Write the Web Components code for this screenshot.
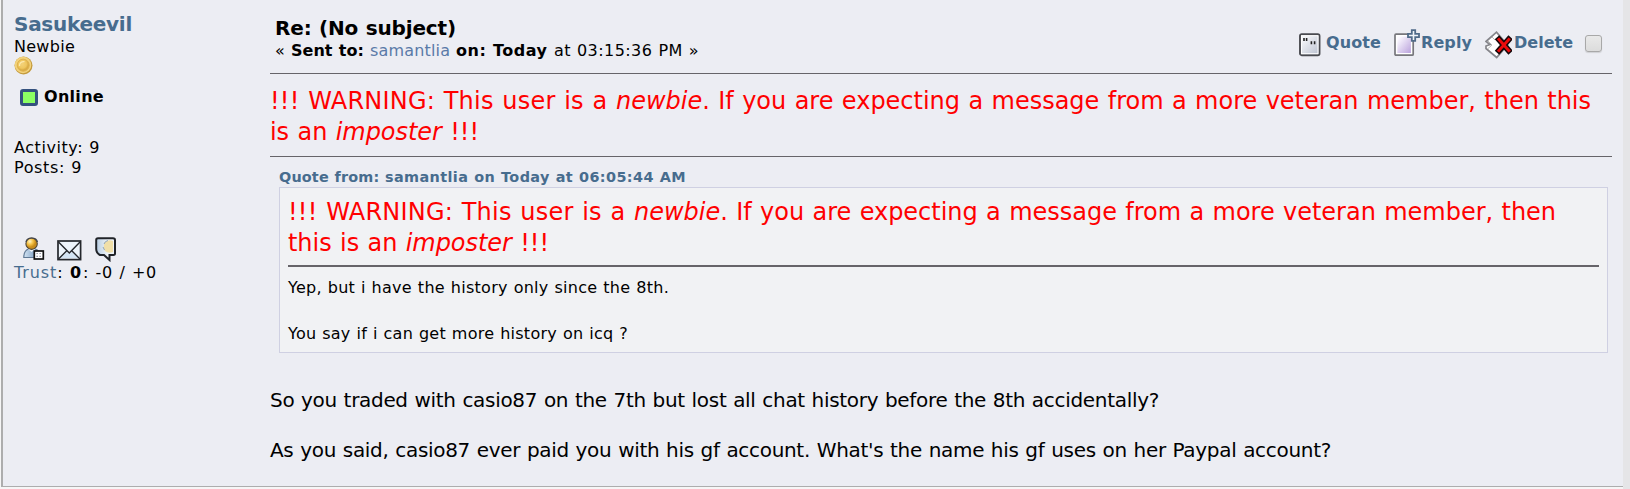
<!DOCTYPE html>
<html lang="en">
<head>
<meta charset="utf-8">
<title>Re: (No subject)</title>
<style>
body{margin:0;background:#f6f6f6;font-family:Verdana,"DejaVu Sans",sans-serif;color:#000}
a{color:#476c8e;text-decoration:none}
</style>
</head>
<body>
<message-page></message-page>
<script>
const define = (name, html, ready) => {
  const t = document.createElement('template');
  t.innerHTML = html;
  customElements.define(name, class extends HTMLElement {
    connectedCallback() {
      if (this.shadowRoot) return;
      this.attachShadow({mode: 'open'}).append(t.content.cloneNode(true));
      if (ready) ready(this);
    }
  });
};

/* One line of text, tracked so that its advance equals the "w" attribute. */
define('fit-text', `<style>:host{display:block;white-space:pre;width:max-content;word-spacing:.034em}</style><slot></slot>`, el => {
  const natural = el.getBoundingClientRect().width;
  const n = el.textContent.length;
  el.style.letterSpacing = ((+el.getAttribute('w') - natural) / n) + 'px';
});

define('coin-icon', `<style>:host{display:block;width:19px;height:19px}svg{display:block}</style>
<svg width="19" height="19" viewBox="0 0 19 19"><defs><radialGradient id="g" cx=".42" cy=".4"><stop offset="0" stop-color="#f3d27a"/><stop offset=".7" stop-color="#efc75f"/><stop offset="1" stop-color="#d9ab45"/></radialGradient></defs>
<circle cx="9.5" cy="9.5" r="9" fill="#c39a3c"/><circle cx="9" cy="9" r="8.3" fill="#f2d27b"/><circle cx="9.2" cy="9.2" r="6" fill="url(#g)" stroke="#dfb24f" stroke-width="1"/><path d="M5.5 10a4 4 0 0 1 5-4.3" fill="none" stroke="#fbe8ae" stroke-width="1.3"/></svg>`);

define('profile-icon', `<style>:host{display:block;width:22px;height:25px}svg{display:block}</style>
<svg width="22" height="25" viewBox="0 0 22 25"><defs><radialGradient id="g" cx=".35" cy=".3"><stop offset="0" stop-color="#fff6c8"/><stop offset=".55" stop-color="#f5c245"/><stop offset="1" stop-color="#c98d1c"/></radialGradient><linearGradient id="b"><stop offset="0" stop-color="#d3e4f3"/><stop offset="1" stop-color="#6288b2"/></linearGradient></defs>
<path d="M.8 20.500Q.8 13 6 12H12Q17 13 17 20.500Z" fill="url(#b)" stroke="#5f7894" stroke-width="1.200"/><path d="M5 12l3.500 3 4-3" fill="#eef5fb"/>
<circle cx="8.600" cy="6.700" r="5.700" fill="url(#g)" stroke="#4b4438" stroke-width="1.100"/><path d="M3 5Q3.500 1 8.600 1T14.500 5" fill="none" stroke="#45484d" stroke-width="1.200"/>
<rect x="11.300" y="14" width="9" height="8" fill="#fff" stroke="#111" stroke-width="1.700"/><path d="M13.500 16.500h1.300M16.500 16.500h1.300M13.500 19.300h1.300M16.500 19.300h1.300" stroke="#889" stroke-width="1.200"/></svg>`);

define('mail-icon', `<style>:host{display:block;width:25px;height:21px}svg{display:block}</style>
<svg width="25" height="21" viewBox="0 0 25 21"><rect x="1" y="1" width="22.600" height="18.600" fill="#edf4fa" stroke="#24272c" stroke-width="1.700"/><path d="M3.500 18L10 12l2.300 2L15 12l6.300 6z" fill="#d4e5f4"/><path d="M1.500 2L12.300 13 23 2M1.500 19l8-8M23 19l-8-8" fill="none" stroke="#24272c" stroke-width="1.400"/></svg>`);

define('chat-icon', `<style>:host{display:block;width:22px;height:25px}svg{display:block}</style>
<svg width="22" height="25" viewBox="0 0 22 25"><defs><linearGradient id="b"><stop offset="0" stop-color="#b7cde3"/><stop offset=".6" stop-color="#eef3f7"/></linearGradient></defs>
<path d="M3 1.200H18Q20 1.200 20 3V16.500Q20 18 18.500 18H14.500V23L9 18H5Q1.200 16 1.200 12V3Q1.200 1.200 3 1.200Z" fill="url(#b)" stroke="#202328" stroke-width="2"/><path d="M9 9V6q4-4 9-2v11q-5 2-8-1l-1.500-3z" fill="#f0dfa8"/><path d="M9 7q1-3 4-3.500M8 10l1.500 3" stroke="#8fa5bc" fill="none" stroke-width="1"/></svg>`);

define('quote-icon', `<style>:host{display:block;width:22px;height:24px}svg{display:block}</style>
<svg width="22" height="24" viewBox="0 0 22 24"><defs><linearGradient id="b" x2="1" y2="1"><stop offset=".2" stop-color="#f4f5f8"/><stop offset="1" stop-color="#b8bfce"/></linearGradient></defs>
<rect x="1" y="1.200" width="19.500" height="21" rx="1.700" fill="url(#b)" stroke="#4a4b50" stroke-width="1.900"/><rect x="2.500" y="2.700" width="16.500" height="18" fill="none" stroke="#fff"/><path d="M5 5v3M7.600 5v3M12.400 8.200v3M15.600 8.200v3" stroke="#222" stroke-width="1.600"/></svg>`);

define('reply-icon', `<style>:host{display:block;width:26px;height:28px}svg{display:block}</style>
<svg width="26" height="28" viewBox="0 0 26 28"><defs><linearGradient id="b" x2="1" y2="1"><stop offset=".1" stop-color="#fbf9ff"/><stop offset="1" stop-color="#baa2dc"/></linearGradient></defs>
<rect x="1" y="5.200" width="18.200" height="21" rx="1" fill="#fff" stroke="#77777c" stroke-width="1.700"/><rect x="3.300" y="7.500" width="13.600" height="16.500" fill="url(#b)"/><path d="M17.800 1.200h3.400v3.600h3.800v3.400h-3.800v3.600h-3.400V8.200h-3.800V4.800h3.800z" fill="#eef3f8" stroke="#506b89" stroke-width="1.800"/></svg>`);

define('delete-icon', `<style>:host{display:block;width:27px;height:28px}svg{display:block}</style>
<svg width="27" height="28" viewBox="0 0 27 28"><path d="M1 10.500L11.500 1.200 22.500 14 11.700 26.500 1 17.500V15L5 13.500z" fill="#fff" stroke="#85858a" stroke-width="1.700"/><path d="M3 10l4 4-4 3.500M7 6l3 3" fill="none" stroke="#bbb" stroke-width="1"/><path d="M14 8.500l9.700 11M23.700 8.500l-9.700 11" stroke="#16080a" stroke-width="6" stroke-linecap="square"/><path d="M14 8.500l9.700 11M23.700 8.500l-9.700 11" stroke="#ee0b0b" stroke-width="3" stroke-linecap="square"/></svg>`);

define('online-icon', `<style>:host{display:block;box-sizing:border-box;width:18px;height:17px;border:3px solid #34517e;border-radius:3px;background:#8cff63}</style>`);

define('tick-box', `<style>:host{display:block;box-sizing:border-box;width:17px;height:17px;border:1px solid #a8a8a8;border-radius:3px;background:linear-gradient(#e9e9e9,#dcdcdc);box-shadow:0 1px 1px #d0d0d4}</style>`);

define('user-panel', `<style>
:host{display:flex;flex-direction:column;width:256px;padding:11px 0 0 11px;box-sizing:border-box;font-size:16px;line-height:20px}
a{color:#476c8e}
.name{font-size:20px;font-weight:bold;line-height:26px;color:#476c8e}
.online{display:flex;gap:6px;margin:12px 0 31px 6px;font-weight:bold}
online-icon{margin-top:2px}
.stats{line-height:19.500px}
.icons{display:flex;margin:60px 0 0 9px;height:25px}
mail-icon{margin:3px 13px 0 12px}
.trust{display:flex;margin-top:1px}
</style>
<fit-text class="name" w="118">Sasukeevil</fit-text>
<fit-text w="61" style="line-height:19px">Newbie</fit-text>
<coin-icon></coin-icon>
<div class="online"><online-icon></online-icon><fit-text w="60">Online</fit-text></div>
<div class="stats"><fit-text w="86">Activity: 9</fit-text><fit-text w="68">Posts: 9</fit-text></div>
<div class="icons"><profile-icon></profile-icon><mail-icon></mail-icon><chat-icon></chat-icon></div>
<div class="trust"><fit-text w="56"><a>Trust</a>: </fit-text><fit-text w="13"><b>0</b></fit-text><fit-text w="74">: -0 / +0</fit-text></div>`);

define('action-link', `<style>:host{display:flex;color:#476c8e;font-weight:bold;font-size:16px;line-height:20px}.t{margin-top:5px}</style><slot name="icon"></slot><div class="t"><slot></slot></div>`);

define('post-header', `<style>
:host{display:flex;justify-content:space-between;height:73px;border-bottom:1px solid #666469}
.l{padding:15px 0 0 5px}
.subj{font-size:20px;line-height:26px;font-weight:bold}
.sent{display:flex;font-size:16px;line-height:20px}
.r{display:flex;align-items:flex-start;padding:28px 10px 0 0}
a{color:#5a7aa8}
</style>
<div class="l"><fit-text class="subj" w="181">Re: (No subject)</fit-text>
<div class="sent"><fit-text w="16">« </fit-text><fit-text w="79"><b>Sent to: </b></fit-text><fit-text w="86"><a>samantlia</a> </fit-text><fit-text w="98"><b>on: Today </b></fit-text><fit-text w="145">at 03:15:36 PM »</fit-text></div></div>
<div class="r">
<action-link><quote-icon slot="icon" style="margin:5px 5px 0 0"></quote-icon><fit-text w="55">Quote</fit-text></action-link>
<action-link style="margin-left:13px"><reply-icon slot="icon" style="margin:1px 1px 0 0"></reply-icon><fit-text w="51">Reply</fit-text></action-link>
<action-link style="margin-left:13px"><delete-icon slot="icon" style="margin:3px 2px 0 0"></delete-icon><fit-text w="59">Delete</fit-text></action-link>
<tick-box style="margin:7px 0 0 12px"></tick-box>
</div>`);

define('warning-text', `<style>:host{display:block;color:#f00;font-size:24px;line-height:31px}</style><slot></slot>`);

define('quote-block', `<style>
:host{display:block;margin:10px 4px 0 9px}
.h{display:flex;font-size:14.400px;line-height:20px;font-weight:bold;color:#476c8e}
.box{box-sizing:border-box;height:166px;border:1px solid #cfd0e2;background:#f1f2f4;padding:9px 8px 0 8px}
.rule{height:2px;background:#666469;margin:6px 0 9px}
.line{display:flex}
.txt{font-size:16px;line-height:23px}
.txt fit-text+fit-text{margin-top:23px}
</style>
<div class="h"><fit-text w="106">Quote from: </fit-text><fit-text w="301">samantlia on Today at 06:05:44 AM</fit-text></div>
<div class="box">
<warning-text><div class="line"><fit-text w="346">!!! WARNING: This user is a </fit-text><fit-text w="922"><i>newbie</i>. If you are expecting a message from a more veteran member, then</fit-text></div><fit-text w="261">this is an <i>imposter</i> !!!</fit-text></warning-text>
<div class="rule"></div>
<div class="txt"><fit-text w="381">Yep, but i have the history only since the 8th.</fit-text><fit-text w="340">You say if i can get more history on icq ?</fit-text></div>
</div>`);

define('post-body', `<style>
:host{display:block}
.warn{display:block;height:82px;border-bottom:1px solid #666469}
.line{display:flex}
warning-text{padding-top:12px}
.msg{padding-top:35px;font-size:20px;line-height:25px}
.msg fit-text+fit-text{margin-top:25px}
</style>
<div class="warn"><warning-text><div class="line"><fit-text w="346">!!! WARNING: This user is a </fit-text><fit-text w="975"><i>newbie</i>. If you are expecting a message from a more veteran member, then this</fit-text></div><fit-text w="209">is an <i>imposter</i> !!!</fit-text></warning-text></div>
<quote-block></quote-block>
<div class="msg"><fit-text w="889">So you traded with casio87 on the 7th but lost all chat history before the 8th accidentally?</fit-text><fit-text w="1061">As you said, casio87 ever paid you with his gf account. What's the name his gf uses on her Paypal account?</fit-text></div>`);

define('message-page', `<style>
:host{display:flex;height:489px;background:#e5e5e7;overflow:hidden}
.cell{display:flex;box-sizing:border-box;width:1622px;height:487px;margin-left:1px;border-left:2px solid #adadad;border-bottom:1px solid #adadad;background:#ecedf3}
.wrap{background:#f6f6f6;width:1623px}
main{width:1342px;margin-left:11px}
</style>
<div class="wrap"><div class="cell"><user-panel></user-panel><main><post-header></post-header><post-body></post-body></main></div></div>`);
</script>
</body>
</html>
